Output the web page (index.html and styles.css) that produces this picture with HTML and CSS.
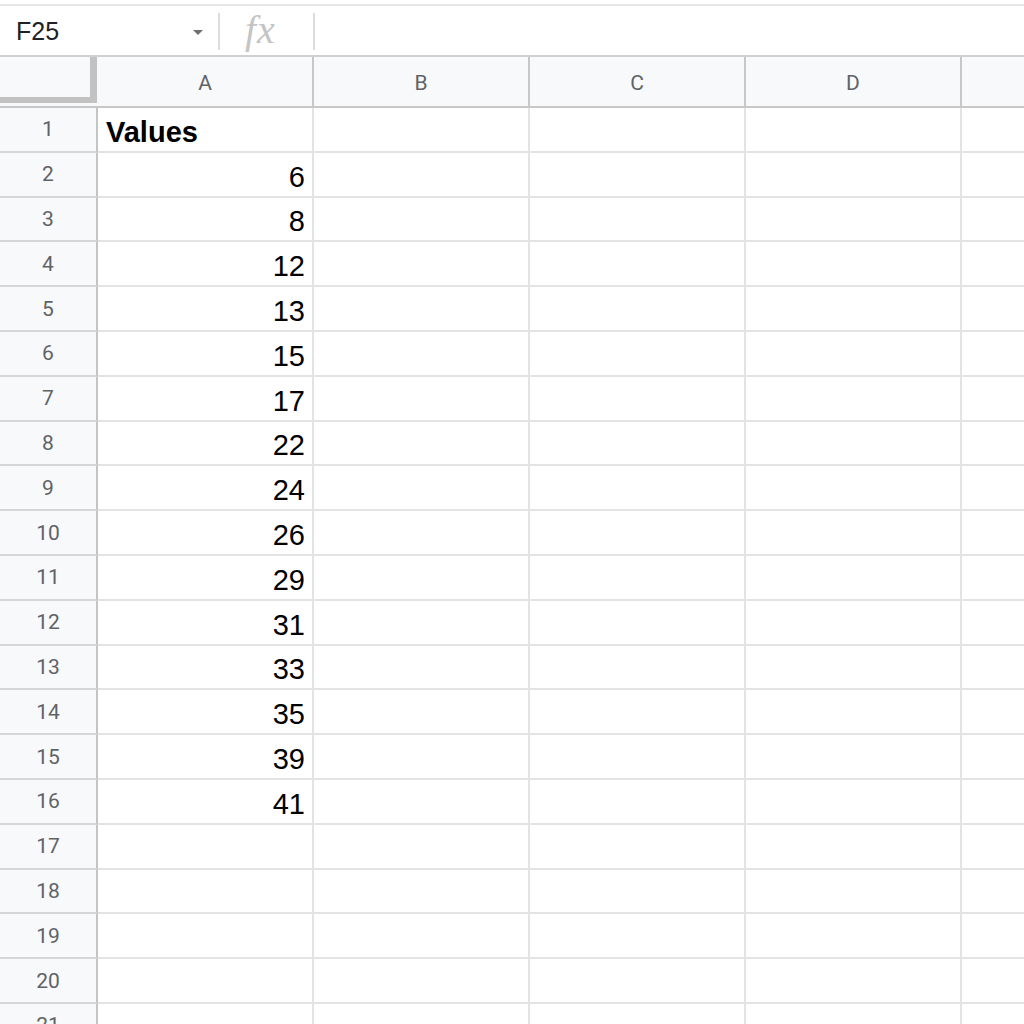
FILE: index.html
```html
<!DOCTYPE html>
<html>
  <head>
    <title>Values - Sheet</title>
    <link rel="stylesheet" href="styles.css">
  </head>
  <body>
    <div class="formula-bar">
      <div class="name-box">
        <span class="cell-ref">F25</span>
        <span class="caret"></span>
      </div>
      <div class="fx-box"><span class="fx">fx</span></div>
      <div class="formula-input"></div>
    </div>

    <div class="sheet">
      <div class="row header-row">
        <div class="corner"><div class="freeze"></div></div>
        <div class="col-head">A</div>
        <div class="col-head">B</div>
        <div class="col-head">C</div>
        <div class="col-head">D</div>
        <div class="col-head last"></div>
      </div>

      <div class="row"><div class="row-num">1</div><div class="cell bold">Values</div><div class="cell"></div><div class="cell"></div><div class="cell"></div><div class="cell last"></div></div>
      <div class="row"><div class="row-num">2</div><div class="cell num">6</div><div class="cell"></div><div class="cell"></div><div class="cell"></div><div class="cell last"></div></div>
      <div class="row"><div class="row-num">3</div><div class="cell num">8</div><div class="cell"></div><div class="cell"></div><div class="cell"></div><div class="cell last"></div></div>
      <div class="row"><div class="row-num">4</div><div class="cell num">12</div><div class="cell"></div><div class="cell"></div><div class="cell"></div><div class="cell last"></div></div>
      <div class="row"><div class="row-num">5</div><div class="cell num">13</div><div class="cell"></div><div class="cell"></div><div class="cell"></div><div class="cell last"></div></div>
      <div class="row"><div class="row-num">6</div><div class="cell num">15</div><div class="cell"></div><div class="cell"></div><div class="cell"></div><div class="cell last"></div></div>
      <div class="row"><div class="row-num">7</div><div class="cell num">17</div><div class="cell"></div><div class="cell"></div><div class="cell"></div><div class="cell last"></div></div>
      <div class="row"><div class="row-num">8</div><div class="cell num">22</div><div class="cell"></div><div class="cell"></div><div class="cell"></div><div class="cell last"></div></div>
      <div class="row"><div class="row-num">9</div><div class="cell num">24</div><div class="cell"></div><div class="cell"></div><div class="cell"></div><div class="cell last"></div></div>
      <div class="row"><div class="row-num">10</div><div class="cell num">26</div><div class="cell"></div><div class="cell"></div><div class="cell"></div><div class="cell last"></div></div>
      <div class="row"><div class="row-num">11</div><div class="cell num">29</div><div class="cell"></div><div class="cell"></div><div class="cell"></div><div class="cell last"></div></div>
      <div class="row"><div class="row-num">12</div><div class="cell num">31</div><div class="cell"></div><div class="cell"></div><div class="cell"></div><div class="cell last"></div></div>
      <div class="row"><div class="row-num">13</div><div class="cell num">33</div><div class="cell"></div><div class="cell"></div><div class="cell"></div><div class="cell last"></div></div>
      <div class="row"><div class="row-num">14</div><div class="cell num">35</div><div class="cell"></div><div class="cell"></div><div class="cell"></div><div class="cell last"></div></div>
      <div class="row"><div class="row-num">15</div><div class="cell num">39</div><div class="cell"></div><div class="cell"></div><div class="cell"></div><div class="cell last"></div></div>
      <div class="row"><div class="row-num">16</div><div class="cell num">41</div><div class="cell"></div><div class="cell"></div><div class="cell"></div><div class="cell last"></div></div>
      <div class="row"><div class="row-num">17</div><div class="cell"></div><div class="cell"></div><div class="cell"></div><div class="cell"></div><div class="cell last"></div></div>
      <div class="row"><div class="row-num">18</div><div class="cell"></div><div class="cell"></div><div class="cell"></div><div class="cell"></div><div class="cell last"></div></div>
      <div class="row"><div class="row-num">19</div><div class="cell"></div><div class="cell"></div><div class="cell"></div><div class="cell"></div><div class="cell last"></div></div>
      <div class="row"><div class="row-num">20</div><div class="cell"></div><div class="cell"></div><div class="cell"></div><div class="cell"></div><div class="cell last"></div></div>
      <div class="row"><div class="row-num">21</div><div class="cell"></div><div class="cell"></div><div class="cell"></div><div class="cell"></div><div class="cell last"></div></div>
    </div>
  </body>
</html>
```

FILE: styles.css
```css
html, body {
  height: 100%;
}

body {
  margin: 0;
  padding: 0;
  overflow: hidden;
  background-color: #ffffff;
  font-family: "Liberation Sans", Arial, sans-serif;
  color: #000000;
}

/* formula bar */
.formula-bar {
  display: flex;
  margin-top: 4px;
  height: 53px;
  box-sizing: border-box;
  border-top: 2px solid #e6e6e6;
  border-bottom: 2px solid #d0d0d0;
}

.name-box {
  width: 219px;
  display: flex;
  align-items: center;
  padding-left: 16px;
  padding-right: 16px;
  box-sizing: border-box;
}

.cell-ref {
  flex: 1;
  font-size: 25px;
  color: #202124;
  padding-top: 1px;
}

.caret {
  width: 0;
  height: 0;
  border-left: 5px solid transparent;
  border-right: 5px solid transparent;
  border-top: 5px solid #6f6f6f;
  margin-top: 3px;
}

.fx-box {
  width: 95px;
  box-sizing: border-box;
  display: flex;
  align-items: center;
  padding-left: 26px;
  position: relative;
}

.fx-box::before,
.fx-box::after {
  content: "";
  position: absolute;
  top: 7px;
  bottom: 5px;
  width: 2px;
  background-color: #dadce0;
}

.fx-box::before {
  left: -1px;
}

.fx-box::after {
  right: -1px;
}

.fx {
  font-family: "Liberation Serif", "Times New Roman", serif;
  font-style: italic;
  font-size: 40px;
  color: #c4c4c4;
  letter-spacing: 1px;
  padding-bottom: 3px;
}

.formula-input {
  flex: 1;
}

/* grid */
.row {
  display: flex;
  height: 44.8px;
}

.header-row {
  height: 51px;
}

.corner {
  width: 98px;
  flex-shrink: 0;
  box-sizing: border-box;
  background-color: #f8f9fa;
  border-bottom: 2px solid #c7c7c7;
}

.freeze {
  width: 97px;
  height: 46px;
  box-sizing: border-box;
  border-right: 7px solid #c2c2c2;
  border-bottom: 6px solid #c2c2c2;
}

.col-head {
  width: 216px;
  flex-shrink: 0;
  box-sizing: border-box;
  display: flex;
  align-items: center;
  justify-content: center;
  background-color: #f8f9fa;
  border-right: 2px solid #c7c7c7;
  border-bottom: 2px solid #c7c7c7;
  font-family: Roboto, "Liberation Sans", sans-serif;
  font-size: 21px;
  color: #5f6368;
  padding-top: 2px;
}

.row-num {
  width: 98px;
  flex-shrink: 0;
  box-sizing: border-box;
  display: flex;
  align-items: center;
  justify-content: center;
  background-color: #f8f9fa;
  border-right: 2px solid #c4c4c4;
  border-bottom: 2px solid #d6d6d6;
  font-family: Roboto, "Liberation Sans", sans-serif;
  font-size: 21px;
  color: #5f6368;
}

.cell {
  width: 216px;
  flex-shrink: 0;
  box-sizing: border-box;
  display: flex;
  align-items: flex-end;
  padding: 0 7px 2px 8px;
  border-right: 2px solid #e2e3e3;
  border-bottom: 2px solid #e2e3e3;
  font-size: 29px;
}

.last {
  flex: 1;
  border-right: none;
}

.num {
  justify-content: flex-end;
}

.bold {
  font-weight: bold;
}
```
